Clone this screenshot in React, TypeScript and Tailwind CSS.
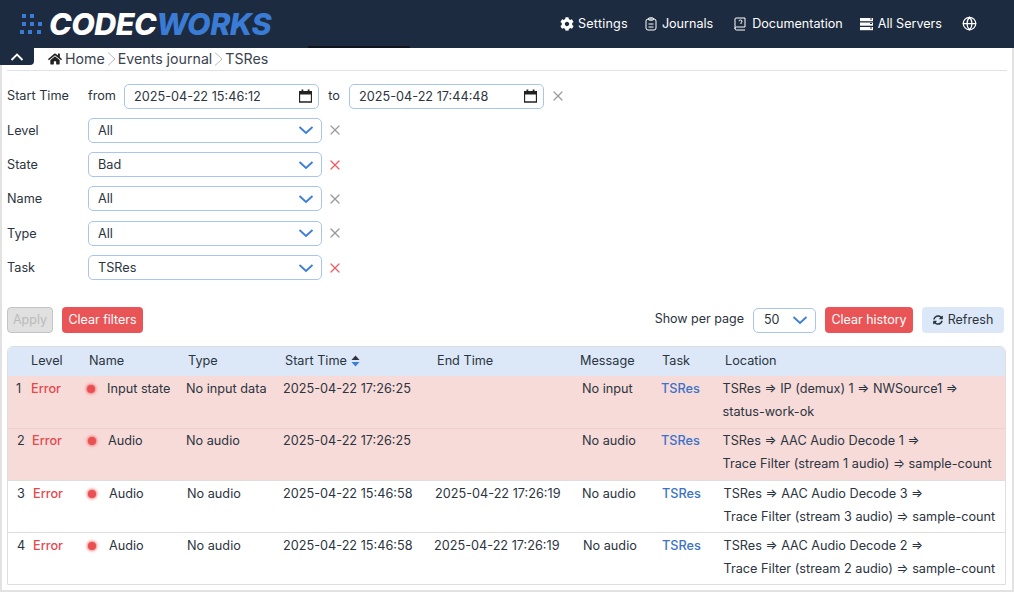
import React from "react";
import { Globe, X } from "lucide-react";
import { FaCog, FaHome, FaSyncAlt } from "react-icons/fa";

const Chev = ({ className = "" }: { className?: string }) => (
  <svg width="16" height="10" viewBox="0 0 16 10" fill="none" className={className}>
    <path d="M1.5 2 L8 8 L14.5 2" stroke="#3b7ddb" strokeWidth="1.8" />
  </svg>
);

const Cal = () => (
  <svg width="13" height="14" viewBox="0 0 13 14">
    <path d="M0.5 4.5 V13 H12.5 V4.5" fill="none" stroke="#222" strokeWidth="1.3" />
    <rect x="0" y="2" width="13" height="3.5" fill="#222" />
    <rect x="2.5" y="0.5" width="1.8" height="3" fill="#222" />
    <rect x="8.7" y="0.5" width="1.8" height="3" fill="#222" />
  </svg>
);

const Crumb = () => (
  <svg width="9" height="16" viewBox="0 0 9 16" fill="none" className="mx-[2px]">
    <path d="M1 1.5 L8 8 L1 14.5" stroke="#bbb" strokeWidth="1" />
  </svg>
);

const Sel = ({ v }: { v: string }) => (
  <div className="w-[234px] h-[25px] border border-[#a8c5ee] rounded-[5px] flex items-center justify-between pl-[9px] pr-[7px] bg-white">
    <span>{v}</span>
    <Chev />
  </div>
);

const Row = ({ label, v, red }: { label: string; v: string; red?: boolean }) => (
  <div className="flex items-center h-[25px]">
    <span className="w-[81px]">{label}</span>
    <Sel v={v} />
    <X size={16} strokeWidth={1.8} className={`ml-[5px] ${red ? "text-[#ee5a5f]" : "text-[#999]"}`} />
  </div>
);

const rows = [
  { n: 1, cols: "grid-cols-[23px_55px_100px_97px_152px_147px_79px_61.5px_1fr]", num: "pl-[8px]", name: "Input state", gap: "mr-[12px]", type: "No input data", start: "2025-04-22 17:26:25", end: "", msg: "No input", l1: "TSRes ⇒ IP (demux) 1 ⇒ NWSource1 ⇒", l2: "status-work-ok", bad: true, pt: "pt-[1px]" },
  { n: 2, cols: "grid-cols-[24px_55px_99px_97px_152px_147px_79px_61.5px_1fr]", num: "pl-[9px]", name: "Audio", gap: "mr-[12px]", type: "No audio", start: "2025-04-22 17:26:25", end: "", msg: "No audio", l1: "TSRes ⇒ AAC Audio Decode 1 ⇒", l2: "Trace Filter (stream 1 audio) ⇒ sample-count", bad: true, line: true, pt: "pt-0" },
  { n: 3, cols: "grid-cols-[25px_54px_100px_96px_152px_147px_80px_61.5px_1fr]", num: "pl-[9px]", name: "Audio", gap: "mr-[13px]", type: "No audio", start: "2025-04-22 15:46:58", end: "2025-04-22 17:26:19", msg: "No audio", l1: "TSRes ⇒ AAC Audio Decode 3 ⇒", l2: "Trace Filter (stream 3 audio) ⇒ sample-count", pt: "pt-[1px]" },
  { n: 4, cols: "grid-cols-[25px_54px_100px_96px_151px_149px_79px_61.5px_1fr]", num: "pl-[9px]", name: "Audio", gap: "mr-[13px]", type: "No audio", start: "2025-04-22 15:46:58", end: "2025-04-22 17:26:19", msg: "No audio", l1: "TSRes ⇒ AAC Audio Decode 2 ⇒", l2: "Trace Filter (stream 2 audio) ⇒ sample-count", pt: "pt-[1px]" },
];

export default function App() {
  return (
    <div className="w-[1014px] h-[592px] bg-white text-[12.7px] text-[#2b3440] overflow-hidden flex flex-col" style={{ fontFamily: "Inter, sans-serif" }}>
      <header className="relative h-[48px] shrink-0 bg-[#1c2b40] flex items-center justify-between pl-[20px] pr-[37px] text-white">
        <div className="flex items-center gap-[4px]">
          <svg width="25" height="22" viewBox="0 0 25 22" fill="#3a7bd5">
            <rect x="2" y="1" width="4" height="4" /><rect x="10" y="1" width="4" height="4" />
            <rect x="2" y="9" width="4" height="4" /><rect x="10" y="9" width="4" height="4" /><rect x="18" y="9" width="4" height="4" />
            <rect x="0" y="17" width="4" height="4" /><rect x="8" y="17" width="4" height="4" /><rect x="17" y="17" width="4" height="4" />
          </svg>
          <span className="text-[30.5px] leading-none font-extrabold italic tracking-[-0.5px]">CODEC<span className="text-[#3a7bd5]">WORKS</span></span>
        </div>
        <nav className="flex items-center text-[12.6px]">
          <span className="flex items-center gap-[4px] mr-[17px] tracking-[0.2px]"><FaCog size={14} />Settings</span>
          <span className="flex items-center gap-[5px] mr-[21px]">
            <svg width="12" height="14" viewBox="0 0 12 14" fill="none" stroke="currentColor" strokeWidth="1"><rect x="1" y="2" width="10" height="11" rx="2" /><rect x="3.5" y="0.8" width="5" height="2.4" rx="1" /><path d="M3.5 7h5M3.5 10h5" /></svg>
            Journals
          </span>
          <span className="flex items-center gap-[6px] mr-[17px]">
            <svg width="12" height="14" viewBox="0 0 12 14" fill="none" stroke="currentColor" strokeWidth="1"><path d="M1 12V2a1 1 0 0 1 1-1h9v9H2.5a1.5 1.5 0 0 0 0 3H11" /><path d="M5 4.2a1.5 1.3 0 1 1 2 1.3V7" /></svg>
            Documentation
          </span>
          <span className="flex items-center gap-[5px] mr-[20px]">
            <svg width="13" height="14" viewBox="0 0 13 14" fill="currentColor"><rect x="0" y="1" width="13" height="3.2" /><rect x="0" y="5.5" width="13" height="3.2" /><rect x="0" y="10" width="13" height="3.2" /><path d="M10 2h2M10 6.5h2M10 11h2" stroke="#1c2b40" strokeWidth="1" /></svg>
            All Servers
          </span>
          <Globe size={15} />
        </nav>
        <div className="absolute left-[308px] bottom-0 w-[102px] h-[2px] bg-[#10141c]" />
      </header>
      <div className="flex-1 min-h-0 border-x-2 border-b-2 border-[#e2e2e2]">
        <div className="relative flex items-center h-[23px] pl-[41px] mx-[5px] border-b border-[#dde3ec] text-[14.2px] text-[#3a4350]">
          <div className="absolute left-[-7px] top-0 w-[34px] h-[17px] bg-[#1c2b40] flex items-center justify-center rounded-br-[4px]">
            <svg width="14" height="8" viewBox="0 0 14 8" fill="none"><path d="M1.5 7 L7 1.5 L12.5 7" stroke="#fff" strokeWidth="1.8" /></svg>
          </div>
          <FaHome size={14} className="mr-[3px] text-[#222]" />Home<Crumb />Events journal<Crumb />TSRes
        </div>
        <div className="px-[5px] pt-[12.6px] flex flex-col gap-[9.3px]">
          <div className="flex items-center h-[25px]">
            <span className="w-[81px] pb-[2px]">Start Time</span>
            <span className="w-[36px] pb-[2px]">from</span>
            <div className="w-[195px] h-[25px] border border-[#a8c5ee] rounded-[5px] flex items-center justify-between pl-[9px] pr-[6px]">2025-04-22 15:46:12<Cal /></div>
            <span className="w-[30px] text-center pb-[2px]">to</span>
            <div className="w-[195px] h-[25px] border border-[#a8c5ee] rounded-[5px] flex items-center justify-between pl-[9px] pr-[6px]">2025-04-22 17:44:48<Cal /></div>
            <X size={16} strokeWidth={1.8} className="ml-[6px] text-[#999]" />
          </div>
          <Row label="Level" v="All" />
          <Row label="State" v="Bad" red />
          <Row label="Name" v="All" />
          <Row label="Type" v="All" />
          <Row label="Task" v="TSRes" red />
        </div>
        <div className="flex items-center justify-between pl-[5px] pr-[8px] mt-[27.4px] h-[26px] text-[12.5px]">
          <div className="flex gap-[9px]">
            <button className="h-[26px] w-[46px] rounded-[4px] bg-[#e0e0e0] border border-[#c4c4c4] text-[#bbb]">Apply</button>
            <button className="h-[26px] w-[81px] rounded-[4px] bg-[#e95557] text-white">Clear filters</button>
          </div>
          <div className="flex items-center">
            <span className="mr-[9px] -mt-[2px]">Show per page</span>
            <div className="w-[63px] h-[25px] border border-[#a8c5ee] rounded-[5px] flex items-center justify-between pl-[10px] pr-[7px] mr-[9px]">50<Chev /></div>
            <button className="h-[26px] w-[88px] rounded-[4px] bg-[#e95557] text-white mr-[9px]">Clear history</button>
            <button className="h-[26px] w-[82px] rounded-[4px] bg-[#dce8f7] flex items-center justify-center gap-[5px]"><FaSyncAlt size={10} />Refresh</button>
          </div>
        </div>
        <div className="ml-[5px] mt-[13px] border border-[#dedede] rounded-t-[6px] overflow-hidden w-[999px]">
          <div className="grid grid-cols-[23px_58px_99px_97px_152px_143px_82px_63px_1fr] h-[29px] pb-[2px] items-center bg-[#dce8f7]">
            <span /><span>Level</span><span>Name</span><span>Type</span>
            <span className="flex items-center gap-[4px]">Start Time
              <svg width="9" height="12" viewBox="0 0 9 12"><path d="M4.5 0.5 L8.5 5 H0.5 Z" fill="#2b3440" /><path d="M4.5 11.5 L8.5 7 H0.5 Z" fill="#3b7ddb" /></svg>
            </span>
            <span>End Time</span><span>Message</span><span>Task</span><span>Location</span>
          </div>
          {rows.map((r) => (
            <div key={r.n} className={`grid ${r.cols} h-[52px] ${r.pt} leading-[23px] ${r.bad ? "bg-[#f7dbd9]" : "border-t border-[#dedede]"} ${r.line ? "border-t border-[#f0d0ce]" : ""}`}>
              <span className={r.num}>{r.n}</span>
              <span className="text-[#e5484d] font-medium">Error</span>
              <span className="flex h-[23px] items-center"><span className={`w-[8px] h-[8px] ml-[1px] rounded-full bg-[#ea4f52] shadow-[0_0_3px_1px_#ee7678] ${r.gap}`} />{r.name}</span>
              <span>{r.type}</span>
              <span>{r.start}</span>
              <span>{r.end}</span>
              <span>{r.msg}</span>
              <span className="text-[#3a72c8] font-medium">TSRes</span>
              <span className="whitespace-nowrap">{r.l1}<br />{r.l2}</span>
            </div>
          ))}
        </div>
      </div>
    </div>
  );
}
